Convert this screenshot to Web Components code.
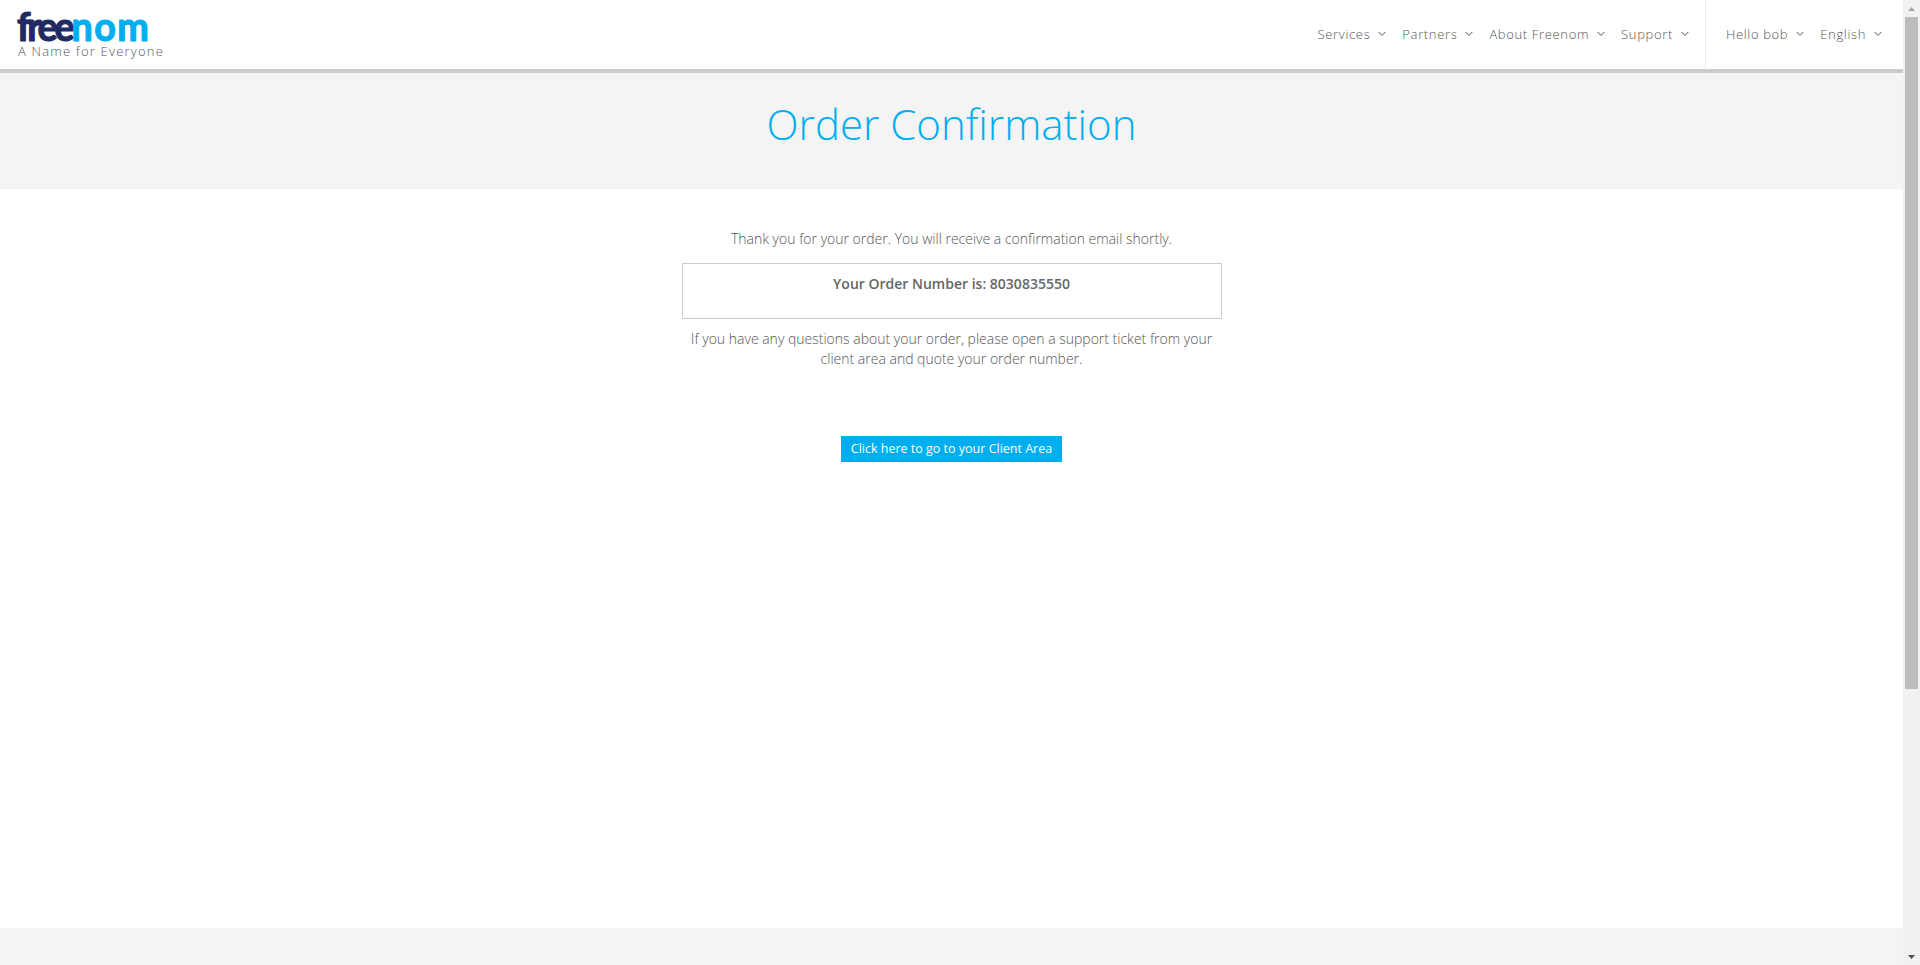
<!DOCTYPE html>
<html>
<head>
<meta charset="utf-8">
<title>Order Confirmation</title>
<style>
    html, body{
        margin: 0;
        height: 100%;
        overflow: hidden;
        background: #fff;
        font-family: "Open Sans", sans-serif;
        color: #555;
    }
</style>
</head>
<body>
<app-page></app-page>

<script>
    class navItem extends HTMLElement{
        constructor(){
            super();
            this.attachShadow({mode: "open"});
            this.shadowRoot.innerHTML = `
                <style>
                    :host{
                        display: flex;
                        align-items: center;
                        gap: 8px;
                        font-size: 13px;
                        font-weight: 300;
                        letter-spacing: .65px;
                        color: #555;
                        white-space: nowrap;
                    }
                    svg{ width: 8px; height: 6px; margin-top: 1px; }
                </style>
                <slot></slot>
                <svg viewBox="0 0 8 6"><path d="M.7 1 4 4.4 7.3 1" fill="none" stroke="#555" stroke-width="1"/></svg>
            `;
        }
    }
    customElements.define("nav-item", navItem);

    class siteHeader extends HTMLElement{
        constructor(){
            super();
            this.attachShadow({mode: "open"});
            this.shadowRoot.innerHTML = `
                <style>
                    :host{
                        display: flex;
                        justify-content: space-between;
                        height: 69px;
                        border-bottom: 4px solid #ccc;
                        background: #fff;
                    }
                    .brand{
                        padding-left: 17px;
                    }
                    .logo{
                        display: block;
                        width: 132px;
                        height: 43px;
                        margin-bottom: 1px;
                        overflow: visible;
                        font-family: Lato, sans-serif;
                        font-size: 41px;
                        font-weight: 700;
                    }
                    .tag{
                        font-size: 13px;
                        line-height: 15px;
                        font-weight: 300;
                        letter-spacing: 1.2px;
                        color: #555;
                        margin-left: 1px;
                    }
                    .right{
                        display: flex;
                    }
                    .menu{
                        display: flex;
                        align-items: center;
                        gap: 16px;
                        padding: 0 16px 2px 0;
                    }
                    .user{
                        display: flex;
                        align-items: center;
                        gap: 16px;
                        padding: 0 21px 2px 20px;
                        border-left: 1px solid #eee;
                    }
                </style>
                <div class="brand">
                    <svg class="logo" viewBox="0 0 132 43">
                        <text transform="translate(0 41) scale(.92 1)" stroke-width="1.2"><tspan letter-spacing="-3.5" fill="#1f2a63" stroke="#1f2a63">free</tspan><tspan letter-spacing="1.6" fill="#00aeef" stroke="#00aeef">nom</tspan></text>
                    </svg>
                    <div class="tag">A Name for Everyone</div>
                </div>
                <div class="right">
                    <div class="menu">
                        <nav-item>Services</nav-item>
                        <nav-item>Partners</nav-item>
                        <nav-item>About Freenom</nav-item>
                        <nav-item>Support</nav-item>
                    </div>
                    <div class="user">
                        <nav-item>Hello bob</nav-item>
                        <nav-item>English</nav-item>
                    </div>
                </div>
            `;
        }
    }
    customElements.define("site-header", siteHeader);

    class pageTitle extends HTMLElement{
        constructor(){
            super();
            this.attachShadow({mode: "open"});
            this.shadowRoot.innerHTML = `
                <style>
                    :host{
                        display: block;
                        height: 116px;
                        background: #f4f4f4;
                        text-align: center;
                    }
                    h1{
                        margin: 0;
                        padding-top: 22px;
                        font-size: 42px;
                        line-height: 58px;
                        font-weight: 300;
                        color: #00aeef;
                    }
                </style>
                <h1><slot></slot></h1>
            `;
        }
    }
    customElements.define("page-title", pageTitle);

    class orderConfirm extends HTMLElement{
        constructor(){
            super();
            this.attachShadow({mode: "open"});
            this.shadowRoot.innerHTML = `
                <style>
                    :host{
                        display: block;
                        height: 739px;
                        box-sizing: border-box;
                        padding-top: 40px;
                        background: #fff;
                        font-size: 14px;
                        line-height: 20px;
                        font-weight: 300;
                        color: #555;
                        text-align: center;
                    }
                    .wrap{
                        width: 540px;
                        margin: 0 auto;
                    }
                    p{ margin: 0; }
                    .box{
                        height: 56px;
                        box-sizing: border-box;
                        margin: 14px 0 10px;
                        padding-top: 10px;
                        border: 1px solid #ccc;
                        font-weight: 600;
                        color: #666;
                    }
                    a{
                        display: inline-block;
                        margin-top: 67px;
                        padding: 0 10px;
                        height: 26px;
                        line-height: 26px;
                        background: #00aeef;
                        color: #fff;
                        font-size: 12.5px;
                        font-weight: 400;
                        text-decoration: none;
                    }
                </style>
                <div class="wrap">
                    <p>Thank you for your order. You will receive a confirmation email shortly.</p>
                    <div class="box">Your Order Number is: 8030835550</div>
                    <p>If you have any questions about your order, please open a support ticket from your client area and quote your order number.</p>
                    <a href="#">Click here to go to your Client Area</a>
                </div>
            `;
        }
    }
    customElements.define("order-confirm", orderConfirm);

    class fakeScrollbar extends HTMLElement{
        constructor(){
            super();
            this.attachShadow({mode: "open"});
            this.shadowRoot.innerHTML = `
                <style>
                    :host{
                        display: flex;
                        flex-direction: column;
                        align-items: center;
                        width: 17px;
                        flex: none;
                        background: #f1f1f1;
                    }
                    .btn{
                        height: 17px;
                        flex: none;
                        display: flex;
                        align-items: center;
                        justify-content: center;
                    }
                    .thumb{
                        width: 13px;
                        height: 672px;
                        background: #bcbcbc;
                        flex: none;
                    }
                    .space{ flex: 1; }
                    svg{ width: 7px; height: 4px; display: block; }
                </style>
                <div class="btn"><svg viewBox="0 0 7 4"><path d="M3.5 0 7 4H0z" fill="#a3a3a3"/></svg></div>
                <div class="thumb"></div>
                <div class="space"></div>
                <div class="btn"><svg viewBox="0 0 7 4"><path d="M0 0h7L3.5 4z" fill="#505050"/></svg></div>
            `;
        }
    }
    customElements.define("fake-scrollbar", fakeScrollbar);

    class appPage extends HTMLElement{
        constructor(){
            super();
            this.attachShadow({mode: "open"});
            this.shadowRoot.innerHTML = `
                <style>
                    :host{
                        display: flex;
                        height: 100vh;
                        overflow: hidden;
                    }
                    .main{
                        flex: 1;
                        min-width: 0;
                        overflow: hidden;
                        background: #f4f4f4;
                    }
                </style>
                <div class="main">
                    <site-header></site-header>
                    <page-title>Order Confirmation</page-title>
                    <order-confirm></order-confirm>
                </div>
                <fake-scrollbar></fake-scrollbar>
            `;
        }
    }
    customElements.define("app-page", appPage);
</script>
</body>
</html>
